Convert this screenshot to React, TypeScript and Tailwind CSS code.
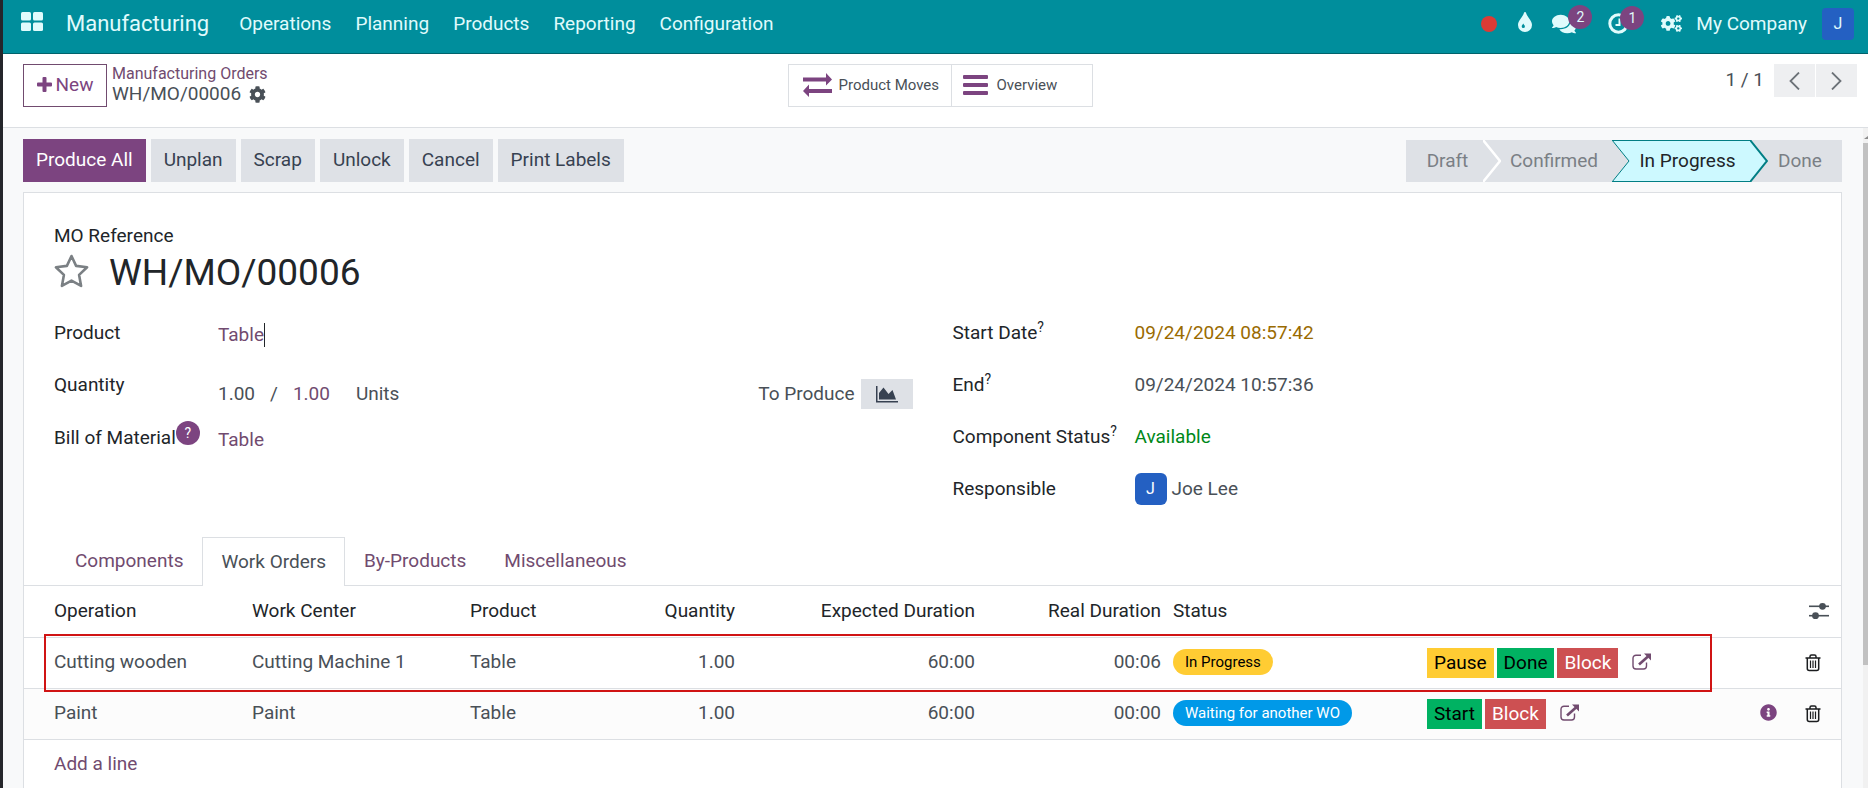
// src/pages/ManufacturingOrderPage.tsx
import React from 'react';
import { FaCog, FaCogs, FaComments, FaInfoCircle } from 'react-icons/fa';

const menuItems = ['Operations', 'Planning', 'Products', 'Reporting', 'Configuration'];
const orderActions = ['Unplan', 'Scrap', 'Unlock', 'Cancel', 'Print Labels'];
const tabs = ['Components', 'Work Orders', 'By-Products', 'Miscellaneous'];

const workOrders = [
  {
    operation: 'Cutting wooden',
    workCenter: 'Cutting Machine 1',
    product: 'Table',
    quantity: '1.00',
    expected: '60:00',
    real: '00:06',
    status: 'In Progress',
    statusClass: 'bg-[#ffcc33] text-black',
    actions: ['Pause', 'Done', 'Block'],
    info: false,
  },
  {
    operation: 'Paint',
    workCenter: 'Paint',
    product: 'Table',
    quantity: '1.00',
    expected: '60:00',
    real: '00:00',
    status: 'Waiting for another WO',
    statusClass: 'bg-[#0099e8] text-white',
    actions: ['Start', 'Block'],
    info: true,
  },
];

const actionClasses: Record<string, string> = {
  Pause: 'bg-[#ffcc33] text-black mr-[3px]',
  Done: 'bg-[#00b262] text-black mr-[3px]',
  Start: 'bg-[#00b262] text-black mr-[3px]',
  Block: 'bg-[#cd5052] text-white',
};

const PlusIcon: React.FC = () => (
  <svg width="15" height="15" viewBox="0 0 15 15" fill="currentColor" aria-hidden="true">
    <path d="M5.500 1q0-1 1-1h2q1 0 1 1v4.500H14q1 0 1 1v2q0 1-1 1H9.500V14q0 1-1 1h-2q-1 0-1-1V9.500H1q-1 0-1-1v-2q0-1 1-1h4.500z" />
  </svg>
);

const DropIcon: React.FC = () => (
  <svg width="14" height="20" viewBox="0 0 14 20" fill="currentColor" fillRule="evenodd" aria-hidden="true">
    <path d="M7 0c.6 0 .9.300 1 .8C9 4.800 14 8.500 14 13a7 7 0 0 1-14 0C0 8.500 5 4.800 6 .8 6.100.300 6.400 0 7 0zM5.200 11.500c-.4 1.200-1.500 1.700-1.500 2.900a1.600 1.600 0 0 0 3.200 0c0-1.200-1.200-1.700-1.700-2.900z" />
  </svg>
);

const AreaChartIcon: React.FC = () => (
  <svg width="22" height="17" viewBox="0 0 22 17" fill="currentColor" aria-hidden="true">
    <path d="M0 0h1.500v15H22v1.500H0z" />
    <path d="M3 13.500V7l4.500-5.500L12.500 8l4-4L20 13.500z" />
  </svg>
);

const ExchangeIcon: React.FC = () => (
  <svg width="29" height="26" viewBox="0 0 29 26" fill="#7c4480" aria-hidden="true">
    <path d="M0 5.500h23V1L29 7.500l-6 6V9.500H0z" />
    <path d="M29 17H6v-4.500L0 19l6 6V21h23z" />
  </svg>
);

const BarsIcon: React.FC = () => (
  <svg width="25" height="20" viewBox="0 0 25 20" fill="#7c4480" aria-hidden="true">
    <rect width="25" height="4" rx="1" />
    <rect y="8" width="25" height="4" rx="1" />
    <rect y="16" width="25" height="4" rx="1" />
  </svg>
);

const ClockIcon: React.FC = () => (
  <svg width="21" height="21" viewBox="0 0 21 21" fill="none" stroke="currentColor" aria-hidden="true">
    <circle cx="10.500" cy="10.500" r="8.700" strokeWidth="3" />
    <path d="M11.500 5.500v6.500H7.500" strokeWidth="2" />
  </svg>
);

const StarIcon: React.FC = () => (
  <svg width="35" height="34" viewBox="0 0 35 34" fill="none" stroke="#7b8084" strokeWidth="2.600" strokeLinejoin="round" aria-hidden="true">
    <path d="M17.500 2l4.600 9.900 11 1.400-8 7.600 2 11-9.600-5.300-9.600 5.300 2-11-8-7.600 11-1.400z" />
  </svg>
);

const ExternalLinkIcon: React.FC = () => (
  <svg width="20" height="18" viewBox="0 0 20 18" fill="none" stroke="#714b6f" strokeWidth="1.400" aria-hidden="true">
    <path d="M9 2.200H4a3 3 0 0 0-3 3V13a3 3 0 0 0 3 3h7.500a3 3 0 0 0 3-3V9.500" />
    <path d="M7 11.500L16 3.500" strokeWidth="2.600" />
    <path d="M12 .5h7v7z" fill="#714b6f" stroke="none" />
  </svg>
);

const TrashIcon: React.FC = () => (
  <svg width="16" height="18" viewBox="0 0 16 18" fill="none" stroke="#1b1d1f" strokeWidth="1.500" aria-hidden="true">
    <path d="M.5 4h15M5 4V2.500Q5 1 6.500 1h3Q11 1 11 2.500V4M2.300 4v10.500q0 2 2 2h7.400q2 0 2-2V4" />
    <path d="M5.500 6.500v7.500M8 6.500v7.500M10.500 6.500v7.500" strokeWidth="1.200" />
  </svg>
);

const SlidersIcon: React.FC = () => (
  <svg width="20" height="18" viewBox="0 0 20 18" fill="#495057" aria-hidden="true">
    <rect y="3.500" width="20" height="1.600" />
    <rect y="12.900" width="20" height="1.600" />
    <circle cx="13.500" cy="4.300" r="3.400" />
    <circle cx="6.500" cy="13.700" r="3.400" />
  </svg>
);

const AppsIcon: React.FC = () => (
  <svg width="22" height="19" viewBox="0 0 22 19" fill="currentColor" aria-hidden="true">
    <rect width="10" height="8.500" rx="1.500" />
    <rect x="12" width="10" height="8.500" rx="1.500" />
    <rect y="10.500" width="10" height="8.500" rx="1.500" />
    <rect x="12" y="10.500" width="10" height="8.500" rx="1.500" />
  </svg>
);

interface ChevronProps {
  left: string;
  right: string;
  line: string;
  lineWidth: number;
  edged?: boolean;
}

const Chevron: React.FC<ChevronProps> = ({ left, right, line, lineWidth, edged }) => (
  <svg className="shrink-0" width="18" height="42" viewBox="0 0 18 42" aria-hidden="true">
    <rect width="18" height="42" fill={right} />
    {edged && <path d="M0 .5h18M0 41.500h18" stroke={line} />}
    <path d="M0 0L17 21L0 42z" fill={left} />
    <path d="M0 0L17 21L0 42" fill="none" stroke={line} strokeWidth={lineWidth} />
  </svg>
);

const Help: React.FC = () => <sup className="text-sm leading-none">?</sup>;

const Navbar: React.FC = () => (
  <header className="flex h-[54px] shrink-0 items-center border-b border-[#00626b] bg-[#008e9c] pr-[14px] pb-[6px] pl-[18px] text-[#e0fbfc]">
    <button type="button" aria-label="Apps" className="mb-1">
      <AppsIcon />
    </button>
    <a href="#" className="ml-[23px] text-[22px] leading-6">Manufacturing</a>
    <nav className="ml-[30px] flex gap-6">
      {menuItems.map((item) => (
        <a key={item} href="#">{item}</a>
      ))}
    </nav>
    <div className="ml-auto flex items-center">
      <span className="size-4 rounded-full bg-[#dc3b35]" />
      <button type="button" aria-label="Theme" className="ml-[21px] mb-1">
        <DropIcon />
      </button>
      <button type="button" aria-label="Messages" className="relative ml-5">
        <FaComments size={24} />
        <span className="absolute -top-[7px] left-4 flex size-6 items-center justify-center rounded-full bg-[#7c4480] text-sm leading-none">2</span>
      </button>
      <button type="button" aria-label="Activities" className="relative ml-8">
        <ClockIcon />
        <span className="absolute -top-[7px] left-3 flex size-6 items-center justify-center rounded-full bg-[#7c4480] text-sm leading-none">1</span>
      </button>
      <button type="button" aria-label="Settings" className="ml-8">
        <FaCogs size={21} />
      </button>
      <button type="button" className="ml-[14px]">My Company</button>
      <button type="button" aria-label="User menu" className="ml-[15px] size-8 rounded-sm bg-[#2460c2] text-base">J</button>
    </div>
  </header>
);

const ControlPanel: React.FC = () => (
  <div className="grid h-[74px] shrink-0 grid-cols-[1fr_auto_1fr] items-start border-b border-[#dcdfe3] bg-white pt-[10px] pr-[11px] pl-5">
    <div className="flex">
      <button type="button" className="flex h-[43px] w-[84px] items-center justify-center gap-1 border border-[#714b6f] pb-0.5 text-[#7c4480]">
        <PlusIcon />
        New
      </button>
      <div className="ml-[5px] flex flex-col">
        <a href="#" className="text-base leading-[19px] text-[#714b6f]">Manufacturing Orders</a>
        <div className="flex items-center gap-2 leading-[22px] text-[#495057]">
          WH/MO/00006
          <button type="button" aria-label="Actions">
            <FaCog size={17} />
          </button>
        </div>
      </div>
    </div>
    <div className="flex h-[43px] border border-[#dcdfe3] text-[15px] text-[#495057]">
      <button type="button" className="flex w-[163px] items-center gap-[7px] border-r border-[#dcdfe3] pb-0.5 pl-[14px]">
        <ExchangeIcon />
        Product Moves
      </button>
      <button type="button" className="flex w-[140px] items-center gap-[9px] pb-0.5 pl-[11px]">
        <BarsIcon />
        Overview
      </button>
    </div>
    <div className="flex items-center justify-end text-[#495057]">
      <span className="mr-[10px] pb-0.5">1 / 1</span>
      <button type="button" aria-label="Previous" className="mr-px flex h-[33px] w-[41px] items-center justify-center bg-[#eeeff1]">
        <svg width="11" height="18" viewBox="0 0 11 18" fill="none" stroke="#6c7278" strokeWidth="1.800">
          <path d="M10 .5L1.500 9l8.500 8.500" />
        </svg>
      </button>
      <button type="button" aria-label="Next" className="flex h-[33px] w-[41px] items-center justify-center bg-[#eeeff1]">
        <svg width="11" height="18" viewBox="0 0 11 18" fill="none" stroke="#6c7278" strokeWidth="1.800">
          <path d="M1 .5L9.500 9 1 17.500" />
        </svg>
      </button>
    </div>
  </div>
);

const StatusBar: React.FC = () => (
  <div className="flex h-[42px] text-[#7a7f85]">
    <button type="button" className="w-[77px] bg-[#dee1e6] pl-[6px]">Draft</button>
    <Chevron left="#dee1e6" right="#dee1e6" line="#ffffff" lineWidth={2.5} />
    <button type="button" className="w-[111px] bg-[#dee1e6] pr-[5px]">Confirmed</button>
    <Chevron left="#dee1e6" right="#cdf9ff" line="#017e84" lineWidth={1} edged />
    <button type="button" className="w-[120px] border-y border-[#017e84] bg-[#cdf9ff] pr-[5px] text-[#212529]">In Progress</button>
    <Chevron left="#cdf9ff" right="#dee1e6" line="#017e84" lineWidth={2} />
    <button type="button" className="w-[74px] bg-[#dee1e6] pr-[10px]">Done</button>
  </div>
);

const OrderFields: React.FC = () => (
  <div className="grid grid-cols-2 gap-x-10 px-[30px]">
    <div className="grid auto-rows-[52px] grid-cols-[164px_1fr]">
      <label htmlFor="product">Product</label>
      <div className="pt-0.5">
        <input id="product" defaultValue="Table" className="field-sizing-content border-r border-[#212529] text-[#714b6f] outline-none" />
      </div>

      <label htmlFor="quantity">Quantity</label>
      <div className="flex items-start pt-[6px] leading-[30px] text-[#495057]">
        <input id="quantity" defaultValue="1.00" className="field-sizing-content outline-none" />
        <span className="mx-[15px]">/</span>
        <a href="#" className="text-[#714b6f]">1.00</a>
        <span className="ml-[26px]">Units</span>
        <span className="ml-auto">To Produce</span>
        <button type="button" aria-label="Forecast" className="ml-[6px] flex h-[30px] w-[52px] items-center justify-center bg-[#dee1e6] text-[#374151]">
          <AreaChartIcon />
        </button>
      </div>

      <div className="flex items-start pt-px">
        <span className="whitespace-nowrap">Bill of Material</span>
        <button type="button" aria-label="Help" className="-mt-[5px] size-6 shrink-0 rounded-full bg-[#7c4480] text-sm leading-6 text-white">?</button>
      </div>
      <a href="#" className="pt-[3px] text-[#714b6f]">Table</a>
    </div>

    <div className="grid auto-rows-[52px] grid-cols-[182px_1fr]">
      <span>Start Date<Help /></span>
      <span className="text-[#9a6b01]">09/24/2024 08:57:42</span>
      <span>End<Help /></span>
      <span className="text-[#495057]">09/24/2024 10:57:36</span>
      <span className="whitespace-nowrap">Component Status<Help /></span>
      <span className="text-[#008818]">Available</span>
      <span>Responsible</span>
      <span className="-mt-1 flex h-8 items-center gap-[5px] text-[#495057]">
        <span className="flex size-8 items-center justify-center rounded-md bg-[#2460c2] text-base text-white">J</span>
        Joe Lee
      </span>
    </div>
  </div>
);

const WorkOrdersTable: React.FC = () => (
  <div className="relative">
    <table className="w-full table-fixed border-collapse text-left text-[#495057]">
      <colgroup>
        <col className="w-[222px]" />
        <col className="w-[218px]" />
        <col className="w-[150px]" />
        <col className="w-[127px]" />
        <col className="w-[240px]" />
        <col className="w-[186px]" />
        <col className="w-[254px]" />
        <col />
        <col className="w-[37px]" />
        <col className="w-[50px]" />
      </colgroup>
      <thead>
        <tr className="h-[51px] border-b border-[#dcdfe3] text-[#212529] *:px-[6px] *:font-normal">
          <th className="pl-[30px]!">Operation</th>
          <th>Work Center</th>
          <th>Product</th>
          <th className="text-right">Quantity</th>
          <th className="text-right">Expected Duration</th>
          <th className="text-right">Real Duration</th>
          <th>Status</th>
          <th />
          <th />
          <th>
            <button type="button" aria-label="Optional columns" className="ml-3 block">
              <SlidersIcon />
            </button>
          </th>
        </tr>
      </thead>
      <tbody>
        {workOrders.map((row) => (
          <tr key={row.operation} className="h-[51px] border-b border-[#dcdfe3] even:bg-[#fcfcfc] *:px-[6px] *:pb-0.5">
            <td className="pl-[30px]!">{row.operation}</td>
            <td>{row.workCenter}</td>
            <td>{row.product}</td>
            <td className="text-right">{row.quantity}</td>
            <td className="text-right">{row.expected}</td>
            <td className="text-right">{row.real}</td>
            <td>
              <span className={`block w-fit rounded-full px-3 text-[15px] leading-[26px] ${row.statusClass}`}>{row.status}</span>
            </td>
            <td className="pb-0!">
              <div className="flex items-center">
                {row.actions.map((action) => (
                  <button key={action} type="button" className={`h-[30px] px-[7px] ${actionClasses[action]}`}>{action}</button>
                ))}
                <button type="button" aria-label="Open work order" className="ml-[14px] mb-0.5">
                  <ExternalLinkIcon />
                </button>
              </div>
            </td>
            <td>
              {row.info && (
                <button type="button" aria-label="Details" className="block text-[#7c4480]">
                  <FaInfoCircle size={17} />
                </button>
              )}
            </td>
            <td className="pb-0!">
              <button type="button" aria-label="Delete" className="ml-2 block">
                <TrashIcon />
              </button>
            </td>
          </tr>
        ))}
      </tbody>
    </table>
    {/* Highlight around the running work order */}
    <div className="pointer-events-none absolute top-12 right-[129px] left-5 h-[58px] border-2 border-[#d01414]" />
    <button type="button" className="ml-[30px] h-[48px] text-[#714b6f]">Add a line</button>
  </div>
);

const App: React.FC = () => {
  return (
    <div className="flex h-screen flex-col overflow-hidden border-l-[3px] border-[#25262b] bg-[#f8f9fa] font-['Roboto','Liberation_Sans',sans-serif] text-[19px] leading-6 text-[#212529]">
      <Navbar />
      <ControlPanel />
      <div className="flex min-h-0 flex-1">
        <main className="flex min-w-0 flex-1 flex-col pt-[11px] pr-[21px] pl-5">
          <div className="flex shrink-0 items-center justify-between">
            <div className="flex h-[43px] gap-[5px]">
              <button type="button" className="bg-[#7c4480] px-[13px] pb-0.5 text-white">Produce All</button>
              {orderActions.map((action) => (
                <button key={action} type="button" className="bg-[#dee1e6] px-[13px] pb-0.5 text-[#374151]">{action}</button>
              ))}
            </div>
            <StatusBar />
          </div>

          <section className="mt-[10px] min-h-0 flex-1 overflow-hidden border border-b-0 border-[#dcdfe3] bg-white">
            <div className="px-[30px] pt-[31px]">
              <div>MO Reference</div>
              <div className="flex h-[50px] items-center gap-5">
                <button type="button" aria-label="Favorite" className="mb-1">
                  <StarIcon />
                </button>
                <h1 className="text-[37px] leading-10">WH/MO/00006</h1>
              </div>
            </div>
            <div className="pt-[23px]">
              <OrderFields />
            </div>

            <div role="tablist" className="mt-2 flex h-[49px] border-b border-[#dcdfe3] pl-8">
              {tabs.map((tab) => (
                <button
                  key={tab}
                  type="button"
                  role="tab"
                  aria-selected={tab === 'Work Orders'}
                  className={
                    tab === 'Work Orders'
                      ? '-mb-px border border-b-0 border-[#dcdfe3] bg-white px-[18px] text-[#495057]'
                      : 'border border-transparent px-[18px] text-[#714b6f]'
                  }
                >
                  {tab}
                </button>
              ))}
            </div>
            <WorkOrdersTable />
          </section>
        </main>

        {/* Scroll track */}
        <div aria-hidden="true" className="w-[5px] bg-[#f1f1f1] pt-2">
          <svg className="mb-1 block" width="5" height="3" viewBox="0 0 5 3" fill="#8b8b8b">
            <path d="M1 3L5 0v3z" />
          </svg>
          <div className="h-4/5 bg-[#c1c1c1]" />
        </div>
      </div>
    </div>
  );
};

export default App;
